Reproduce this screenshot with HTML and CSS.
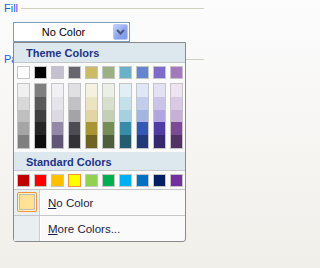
FILE: index.html
```html
<!DOCTYPE html>
<html>
<head>
<meta charset="utf-8">
<link rel="stylesheet" href="styles.css">
</head>
<body>
<div class="group fill-group">
  <div class="group-title"><span class="label">Fill</span><span class="rule"></span></div>
  <div class="combo-wrap">
    <div class="combo">
      <span class="combo-text">No Color</span>
      <span class="combo-btn"><svg width="13" height="14" viewBox="0 0 13 14"><polyline points="3,5 6.5,8.5 10,5" fill="none" stroke="#475a82" stroke-width="2"/></svg></span>
    </div>
    <div class="popup">
      <div class="pop-head">Theme Colors</div>
      <div class="row theme-row">
        <span class="sw" style="background:#ffffff"></span>
        <span class="sw" style="background:#000000"></span>
        <span class="sw" style="background:#c5c0d0"></span>
        <span class="sw" style="background:#67666d"></span>
        <span class="sw" style="background:#ceb966"></span>
        <span class="sw" style="background:#9cb084"></span>
        <span class="sw" style="background:#6bb1c9"></span>
        <span class="sw" style="background:#6585cf"></span>
        <span class="sw" style="background:#7e6bc9"></span>
        <span class="sw" style="background:#a379bb"></span>
      </div>
      <div class="row shades">
        <span class="col"><i style="background:#f0f0f0"></i><i style="background:#d8d8d8"></i><i style="background:#bfbfbf"></i><i style="background:#a5a5a5"></i><i style="background:#7f7f7f"></i></span>
        <span class="col"><i style="background:#7f7f7f"></i><i style="background:#595959"></i><i style="background:#3f3f3f"></i><i style="background:#262626"></i><i style="background:#0d0d0d"></i></span>
        <span class="col"><i style="background:#f1f0f5"></i><i style="background:#e6e4eb"></i><i style="background:#dcd9e3"></i><i style="background:#9388a7"></i><i style="background:#62557a"></i></span>
        <span class="col"><i style="background:#e0e0e2"></i><i style="background:#c2c1c5"></i><i style="background:#a4a3a8"></i><i style="background:#4d4c52"></i><i style="background:#333337"></i></span>
        <span class="col"><i style="background:#f5f1e0"></i><i style="background:#ebe3c2"></i><i style="background:#e2d5a3"></i><i style="background:#aa9535"></i><i style="background:#716323"></i></span>
        <span class="col"><i style="background:#ebefe6"></i><i style="background:#d7dfcd"></i><i style="background:#c3d0b5"></i><i style="background:#758e58"></i><i style="background:#4e5f3b"></i></span>
        <span class="col"><i style="background:#e1eff4"></i><i style="background:#c4e0e9"></i><i style="background:#a6d0df"></i><i style="background:#398ba7"></i><i style="background:#265c6f"></i></span>
        <span class="col"><i style="background:#e0e6f5"></i><i style="background:#c1ceeb"></i><i style="background:#a3b6e2"></i><i style="background:#3459b4"></i><i style="background:#223b78"></i></span>
        <span class="col"><i style="background:#e5e1f4"></i><i style="background:#cbc4e9"></i><i style="background:#b2a6df"></i><i style="background:#513ca4"></i><i style="background:#36286d"></i></span>
        <span class="col"><i style="background:#ece4f1"></i><i style="background:#dac9e4"></i><i style="background:#c8afd6"></i><i style="background:#7b4b96"></i><i style="background:#523264"></i></span>
      </div>
      <div class="pop-head std-head">Standard Colors</div>
      <div class="row std-row">
        <span class="sw" style="background:#c00000"></span>
        <span class="sw" style="background:#ff0000"></span>
        <span class="sw" style="background:#ffc000"></span>
        <span class="sw sel" style="background:#ffff00"></span>
        <span class="sw" style="background:#92d050"></span>
        <span class="sw" style="background:#00b050"></span>
        <span class="sw" style="background:#00b0f0"></span>
        <span class="sw" style="background:#0070c0"></span>
        <span class="sw" style="background:#002060"></span>
        <span class="sw" style="background:#7030a0"></span>
      </div>
      <div class="menu">
        <div class="item">
          <span class="icon-col"><span class="nc-icon"><span class="nc-inner"></span></span></span>
          <span class="item-text"><u>N</u>o Color</span>
        </div>
        <div class="item">
          <span class="icon-col"></span>
          <span class="item-text"><u>M</u>ore Colors...</span>
        </div>
      </div>
    </div>
  </div>
</div>
<div class="group pattern-group">
  <div class="group-title"><span class="label clipped">Patterns</span><span class="rule"></span></div>
</div>
</body>
</html>
```

FILE: styles.css
```css
* { box-sizing: border-box; }
html {
  margin: 0;
  padding: 0;
  background: linear-gradient(#fcfcfd, #f1efe9);
  min-height: 100%;
}
body {
  margin: 0;
  padding: 0;
  width: 204px;
  height: 268px;
  overflow: hidden;
  background: linear-gradient(#fcfcfd, #f1efe9);
  font-family: "Liberation Sans", Arial, sans-serif;
  font-size: 11px;
}
.group-title {
  display: flex;
  align-items: center;
  gap: 3px;
  height: 13px;
  line-height: 13px;
  padding-left: 4px;
}
.fill-group .group-title { margin-top: 2px; }
.pattern-group { margin-top: 11px; }
.label { color: #2160d4; white-space: nowrap; }
.label.clipped { width: 9px; overflow: hidden; flex: none; }
.rule { flex: 1; height: 1px; background: #d0d0c0; }

.combo-wrap {
  position: relative;
  margin: 7px 0 0 13px;
  width: 117px;
}
.combo {
  display: flex;
  height: 20px;
  border: 1px solid #7f9db9;
  background: #ffffff;
  padding: 1px 1px 1px 0;
}
.combo-text {
  flex: 1;
  text-align: center;
  line-height: 16px;
  color: #000;
}
.combo-btn {
  width: 15px;
  height: 16px;
  display: flex;
  align-items: center;
  justify-content: center;
  border: 1px solid #b9c9f5;
  border-radius: 2px;
  background: linear-gradient(135deg, #c3d2f8, #8aa3ec 60%, #7f9ae9);
}

.popup {
  position: absolute;
  left: 0;
  top: 100%;
  width: 173px;
  border: 1px solid #8a8a8a;
  border-radius: 0 0 3px 3px;
  background: #fafafa;
  z-index: 2;
}
.pop-head {
  height: 20px;
  padding: 2px 0 0 12px;
  line-height: 17px;
  background: #dde7ee;
  border-bottom: 1px solid #c5c8cb;
  font-weight: bold;
  color: #1d3485;
}
.std-head {
  height: 19px;
  margin-top: 3px;
  line-height: 16px;
}
.row {
  display: flex;
  gap: 4px;
  padding-left: 3px;
}
.theme-row, .std-row { margin-top: 3px; }
.sw {
  width: 13px;
  height: 13px;
  border: 1px solid #c5c5c5;
}
.sw.sel { border-color: #f29536; }
.shades { margin-top: 4px; }
.col {
  width: 13px;
  height: 66px;
  border: 1px solid #c5c5c5;
  display: flex;
  flex-direction: column;
}
.col i { flex: 1; display: block; }

.menu { margin-top: 2px; }
.item {
  display: flex;
  height: 26px;
  border-top: 1px solid #c5c8cb;
}
.icon-col {
  width: 26px;
  background: #e9eef0;
  border-right: 1px solid #c8cdd0;
  box-shadow: 1px 0 0 #ffffff;
  padding: 2px 0 0 3px;
}
.nc-icon {
  display: block;
  width: 20px;
  height: 20px;
  border: 1px solid #f29536;
  border-radius: 2px;
  padding: 1px;
  background: #fff2c4;
}
.nc-inner {
  display: block;
  width: 16px;
  height: 16px;
  border: 1px solid #bcbcbc;
  background: #ffe293;
}
.item-text {
  padding: 1px 0 0 8px;
  line-height: 24px;
  font-size: 11.5px;
  color: #1c1c48;
}
.item-text u { text-decoration-thickness: 1px; text-underline-offset: 1px; }
.item:last-child { border-bottom-left-radius: 2px; }
```
